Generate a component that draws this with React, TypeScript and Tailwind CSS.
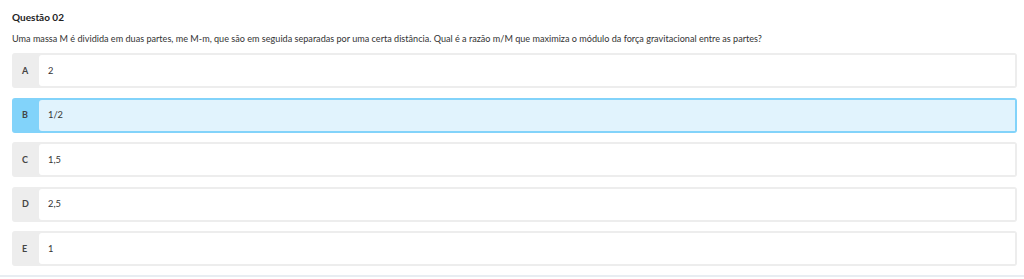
const options = [
  { letter: "A", text: "2" },
  { letter: "B", text: "1/2", selected: true },
  { letter: "C", text: "1,5" },
  { letter: "D", text: "2,5" },
  { letter: "E", text: "1" },
];

export default function App() {
  return (
    <div
      className="w-[1024px] h-[279px] bg-white overflow-hidden"
      style={{ fontFamily: "Lato, 'Open Sans', sans-serif" }}
    >
      <div className="pl-[12px] pr-[7px] pt-[10px]">
        <h2 className="text-[10px] leading-[14px] font-bold text-[#222]">Questão 02</h2>
        <p className="mt-[8px] text-[9.1px] leading-[14px] text-[#333]">
          Uma massa M é dividida em duas partes, me M-m, que são em seguida separadas por uma certa
          distância. Qual é a razão m/M que maximiza o módulo da força gravitacional entre as partes?
        </p>
        <div className="mt-[7px] flex flex-col gap-[9.5px]">
          {options.map((o) => (
            <div
              key={o.letter}
              className={
                o.selected
                  ? "flex h-[35px] rounded-[3px] border-2 border-[#82d3fa] bg-[#82d3fa]"
                  : "flex h-[35px] rounded-[3px] border-2 border-[#ededed] bg-[#ededed]"
              }
            >
              <div className="w-[25px] flex items-center pl-[8px] text-[9px] font-bold text-[#444]">
                {o.letter}
              </div>
              <div
                className={
                  o.selected
                    ? "flex-1 flex items-center pl-[9px] rounded-l-[3px] bg-[#e1f3fd] text-[9.3px] text-[#333]"
                    : "flex-1 flex items-center pl-[9px] rounded-l-[3px] bg-white text-[9.3px] text-[#333]"
                }
              >
                {o.text}
              </div>
            </div>
          ))}
        </div>
      </div>
      <div className="mt-[9px] h-[2px] bg-[#e8edf2]" />
    </div>
  );
}
